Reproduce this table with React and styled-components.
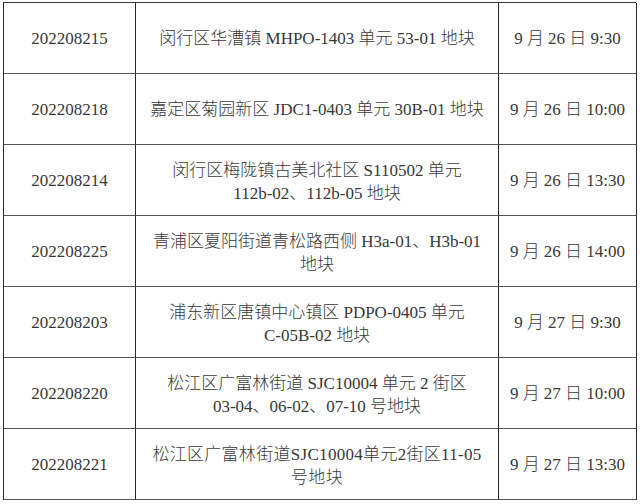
import React from "react";
import styled, { createGlobalStyle } from "styled-components";

const Global = createGlobalStyle`
  html, body { margin: 0; padding: 0; background: #fff; }
  body {
    font-family: "Liberation Serif", "Noto Sans CJK SC", serif;
    color: #383838;
  }
`;

const Page = styled.div`
  padding: 2px 4px 0 3px;
  width: 640px;
  height: 504px;
  box-sizing: border-box;
`;

const Table = styled.div`
  display: grid;
  grid-template-columns: 132px 363px 138px;
  grid-auto-rows: 71px;
  border-top: 1.5px solid #3a3a3a;
  border-left: 1.5px solid #2a2a2a;
  width: 633px;
  box-sizing: border-box;
`;

const Cell = styled.div`
  display: flex;
  flex-direction: column;
  align-items: center;
  justify-content: center;
  text-align: center;
  box-sizing: border-box;
  border-right: 1.5px solid #2a2a2a;
  border-bottom: 1.5px solid #555;
  font-size: 17px;
  line-height: 23px;
  font-weight: 300;
  padding-top: ${(p) => (p.$twoLine ? "3px" : "1px")};
`;

const Line = styled.span`
  white-space: nowrap;
  letter-spacing: ${(p) => (p.$spread ? "0.3px" : "0")};
`;

const rows = [
  { id: "202208215", lines: ["闵行区华漕镇 MHPO-1403 单元 53-01 地块"], time: "9 月 26 日 9:30" },
  { id: "202208218", lines: ["嘉定区菊园新区 JDC1-0403 单元 30B-01 地块"], time: "9 月 26 日 10:00" },
  { id: "202208214", lines: ["闵行区梅陇镇古美北社区 S110502 单元", "112b-02、112b-05 地块"], time: "9 月 26 日 13:30" },
  { id: "202208225", lines: ["青浦区夏阳街道青松路西侧 H3a-01、H3b-01", "地块"], time: "9 月 26 日 14:00" },
  { id: "202208203", lines: ["浦东新区唐镇中心镇区 PDPO-0405 单元", "C-05B-02 地块"], time: "9 月 27 日 9:30" },
  { id: "202208220", lines: ["松江区广富林街道 SJC10004 单元 2 街区", "03-04、06-02、07-10 号地块"], time: "9 月 27 日 10:00" },
  { id: "202208221", lines: ["松江区广富林街道SJC10004单元2街区11-05", "号地块"], time: "9 月 27 日 13:30", spread: true },
];

export default function App() {
  return (
    <>
      <Global />
      <Page>
        <Table>
          {rows.map((r) => (
            <React.Fragment key={r.id}>
              <Cell>
                <Line>{r.id}</Line>
              </Cell>
              <Cell $twoLine={r.lines.length > 1}>
                {r.lines.map((l, i) => (
                  <Line key={i} $spread={r.spread}>{l}</Line>
                ))}
              </Cell>
              <Cell>
                <Line>{r.time}</Line>
              </Cell>
            </React.Fragment>
          ))}
        </Table>
      </Page>
    </>
  );
}
